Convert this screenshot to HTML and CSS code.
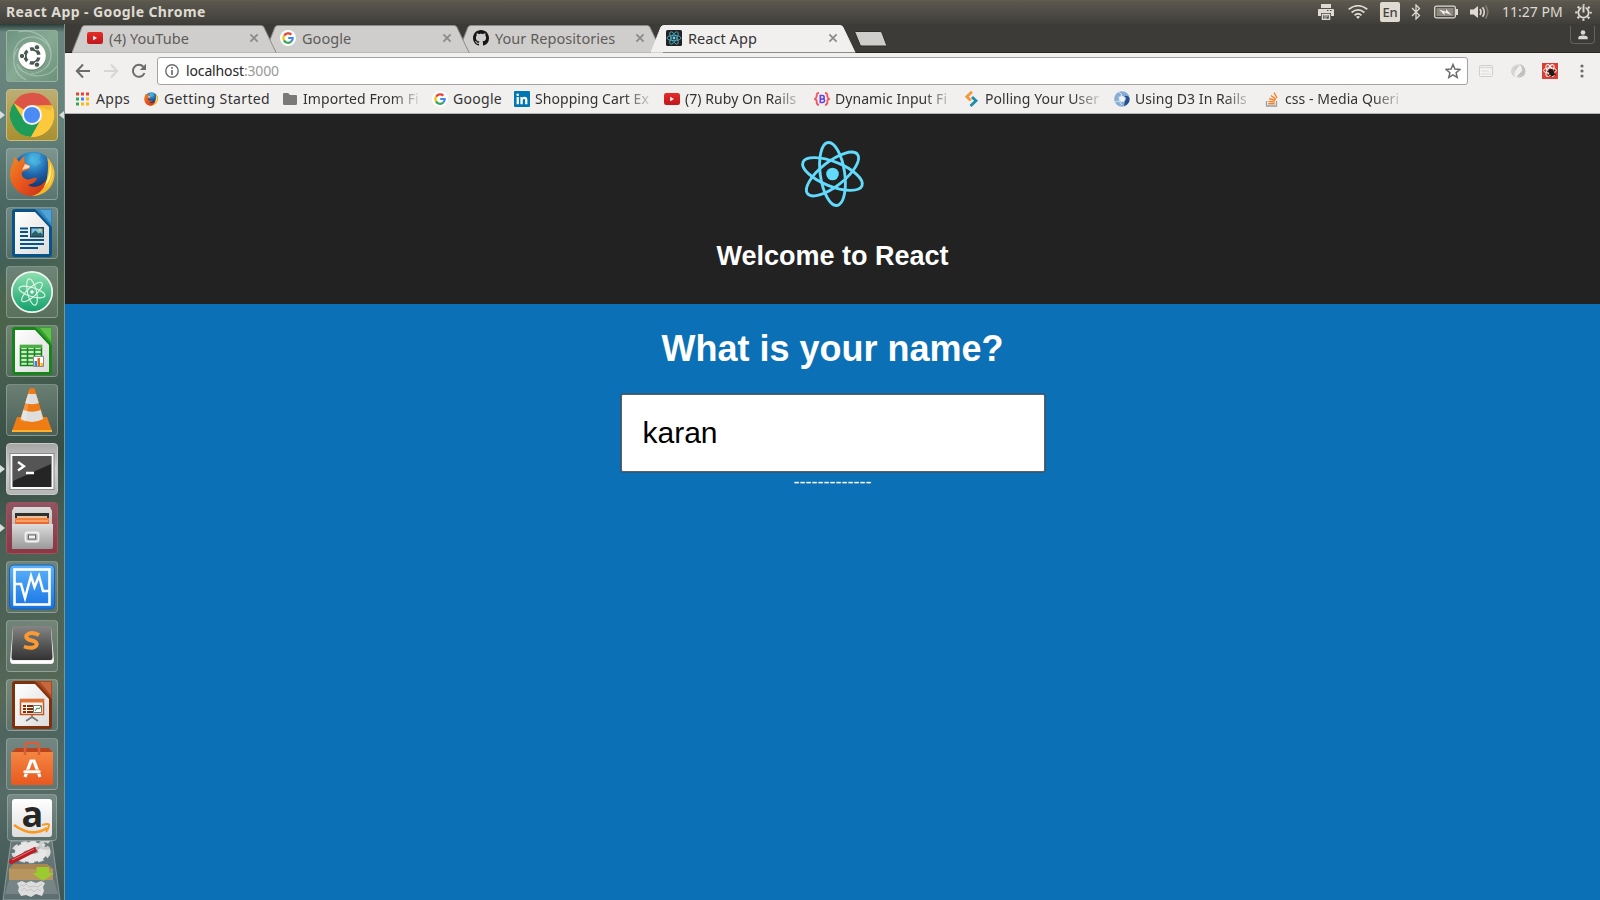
FILE: index.html
```html
<!DOCTYPE html>
<html lang="en">
<head>
<meta charset="utf-8">
<title>React App - Google Chrome</title>
<link rel="stylesheet" href="styles.css">
</head>
<body>
<svg class="defs" width="0" height="0" aria-hidden="true">
  <defs>
    <linearGradient id="red" x1="0" y1="0" x2="0" y2="1"><stop offset="0" stop-color="#e52d27"/><stop offset="1" stop-color="#bf171d"/></linearGradient>
    <linearGradient id="org" x1="0" y1="0" x2="0" y2="1"><stop offset="0" stop-color="#f58642"/><stop offset="1" stop-color="#e8581f"/></linearGradient>
    <linearGradient id="blu" x1="0" y1="0" x2="0" y2="1"><stop offset="0" stop-color="#5db4fa"/><stop offset="1" stop-color="#1573e6"/></linearGradient>
    <linearGradient id="grn" x1="0" y1="0" x2="0" y2="1"><stop offset="0" stop-color="#8fe0b0"/><stop offset="1" stop-color="#12a06c"/></linearGradient>
    <linearGradient id="gry" x1="0" y1="0" x2="0" y2="1"><stop offset="0" stop-color="#dcdcdc"/><stop offset="1" stop-color="#9a9a9a"/></linearGradient>
    <linearGradient id="drk" x1="0" y1="0" x2="0" y2="1"><stop offset="0" stop-color="#858585"/><stop offset=".5" stop-color="#5a5a5a"/><stop offset="1" stop-color="#333"/></linearGradient>
    <linearGradient id="fox" x1="0" y1="0" x2="1" y2="1"><stop offset="0" stop-color="#f08a24"/><stop offset=".5" stop-color="#e8551d"/><stop offset="1" stop-color="#c5301a"/></linearGradient>
    <radialGradient id="globe" cx=".5" cy=".2" r=".7"><stop offset="0" stop-color="#49c0ea"/><stop offset=".5" stop-color="#1f66ac"/><stop offset="1" stop-color="#0e2f66"/></radialGradient>
    <linearGradient id="paper" x1="0" y1="0" x2="1" y2="1"><stop offset="0" stop-color="#fff"/><stop offset="1" stop-color="#dcdcdc"/></linearGradient>
    <symbol id="yt" viewBox="0 0 16 16"><rect y="2" width="16" height="12" rx="2.2" fill="url(#red)"/><path d="M6.2 5.8v4.400L10 8z" fill="#fff"/></symbol>
    <symbol id="goog" viewBox="0 0 16 16"><circle cx="8" cy="8" r="8" fill="#fff"/><g fill="none" stroke-width="2.2"><path d="M4.200 5.600A4.800 4.800 0 0 1 11.400 4.600" stroke="#ea4335"/><path d="M4 10.400A5 5 0 0 1 4 5.600" stroke="#fbbc05"/><path d="M11.200 11.600A4.700 4.700 0 0 1 4 10.400" stroke="#34a853"/><path d="M8.200 8h4.500A4.600 4.600 0 0 1 11.200 11.600" stroke="#4285f4"/></g></symbol>
    <symbol id="firefox" viewBox="0 0 52 52"><circle cx="27" cy="24.500" r="20.800" fill="url(#globe)"/><path d="M24 6c5-2 9-1 11 1l-2 4 2 4-6 3-6-4z" fill="#4cb3df" opacity=".55"/><path d="M41 9c6 6 9 14 7 22-2 10-11 17-22 17l-5-4c11 1 18-5 20-14 1-7 2-14 0-21z" fill="#f6b92b"/><path d="M44 15c3 8 1 18-6 24 4-8 6-15 6-24zM47 21c1 7-2 14-6 19 4-7 6-12 6-19z" fill="#fff08a"/><path d="M8 9c2 1 4 3 5 5 2-3 4-5 6-6-1 3-1 5 0 7l5 3-1 3-7 3c-1 3 1 6 4 7 4 2 7-2 11-1-1 4-5 6-9 7 6 4 14 1 18-5-1 8-6 14-14 16C14 48 4 39 4 26c0-4 1-8 3-11z" fill="url(#fox)"/><path d="M19 16l5 2-1 2-7 2z" fill="#fbd9c1"/></symbol>
    <symbol id="x" viewBox="0 0 10 10"><path d="M1.400 1.400l7.200 7.200M8.600 1.400L1.400 8.600" stroke="#8b8987" stroke-width="1.700"/></symbol>
  </defs>
</svg>

<header class="panel">
  <span class="panel-title">React App - Google Chrome</span>
  <div class="indicators">
    <svg width="16" height="16" viewBox="0 0 16 16"><path d="M3 0h10v4H3zM1 5h14q1 0 1 1v6h-3V9H3v3H0V6q0-1 1-1z" fill="#dfdbd2"/><path d="M4.500 10.500h7v5h-7z" fill="#47453f" stroke="#dfdbd2" stroke-width="1.500"/><path d="M6 12h4M6 14h3" stroke="#dfdbd2"/><path d="M9 6.500h1.500M12 6.500h1.500" stroke="#47453f"/></svg>
    <svg class="i-wifi" width="20" height="14" viewBox="0 0 20 14"><g fill="none" stroke="#dfdbd2" stroke-width="1.700"><path d="M.7 4.300Q10-2.800 19.300 4.300M3.600 7.500Q10 2.200 16.400 7.500M6.500 10.300Q10 7.200 13.500 10.300"/></g><path d="M8 11.700q2-1.500 4 0L10 14z" fill="#dfdbd2"/></svg>
    <span class="lang">En</span>
    <svg class="i-bt" width="10" height="16" viewBox="0 0 10 16"><path d="M1 4l7.500 7.500L5 15V1l3.500 3.500L1 12" fill="none" stroke="#dfdbd2" stroke-width="1.300"/></svg>
    <svg class="i-bat" width="24" height="14" viewBox="0 0 24 14"><rect x=".7" y="1.200" width="20.600" height="11.600" rx="1.500" fill="none" stroke="#dfdbd2" stroke-width="1.300"/><rect x="2.500" y="3" width="17" height="8" fill="#8d8981"/><path d="M22 4h2v6h-2z" fill="#dfdbd2"/><path d="M5 4.500l7 2.200V4l5.500 6-7-2.500v2.800z" fill="#f2efe8"/></svg>
    <svg class="i-snd" width="20" height="16" viewBox="0 0 20 16"><path d="M0 5.500h3.500L8 2v12l-4.500-3.500H0z" fill="#dfdbd2"/><g fill="none" stroke-width="1.600"><path d="M10 5q2 3 0 6M12.500 3.200q3.600 4.800 0 9.600" stroke="#dfdbd2"/><path d="M15.500 1.500q4.600 6.500 0 13" stroke="#7f7c74"/></g></svg>
    <span class="clock">11:27 PM</span>
    <svg class="i-gear" width="17" height="17" viewBox="0 0 17 17"><circle cx="8.500" cy="8.500" r="5.200" fill="none" stroke="#dfdbd2" stroke-width="1.800"/><circle cx="8.500" cy="8.500" r="7.200" fill="none" stroke="#dfdbd2" stroke-width="2.200" stroke-dasharray="2.100 3.555" stroke-dashoffset="1.050"/><path d="M8.500 1v8" stroke="#504e47" stroke-width="4"/><path d="M8.500 1.200v7.300" stroke="#dfdbd2" stroke-width="1.900"/></svg>
  </div>
</header>

<div class="desktop">
  <nav class="launcher">
    <div class="tile tile-dash"><svg viewBox="0 0 52 52"><g fill="none" stroke="#c8dccf" stroke-opacity=".5" stroke-width="1.200"><path d="M8 30C5 12 23 0 38 11c8 6 9 18 3 26M12 2c18-4 34 8 33 24-1 12-11 17-20 18M20 50C8 44 4 30 12 18M51 36C41 51 17 48 11 34"/></g><circle cx="26" cy="26.800" r="14" fill="#42594e" opacity=".35"/><circle cx="26" cy="25.800" r="13.800" fill="#fff"/><circle cx="26" cy="26" r="7" fill="none" stroke="#48594f" stroke-width="3.400" stroke-dasharray="11.600 3.060" stroke-dashoffset="-1.530"/><g fill="#48594f" stroke="#fff" stroke-width="1"><circle cx="16" cy="26" r="2.700"/><circle cx="31" cy="17.300" r="2.700"/><circle cx="31" cy="34.700" r="2.700"/></g></svg></div>
    <div class="tile tile-chrome"><svg viewBox="0 0 52 52"><circle cx="26" cy="26" r="22" fill="#fdc93c"/><path d="M26 26L7.500 14A22 22 0 0 1 46 16.500H26z" fill="#dc5347"/><path d="M7.500 14A22 22 0 0 0 25 48L35 31 26 26 16 28z" fill="#1f9d58"/><path d="M35 16.500h11A22 22 0 0 1 25 48l9.500-17z" fill="#fdc93c"/><path d="M46 16.500H27l18 5z" fill="#c98d22" opacity=".3"/><circle cx="26" cy="26" r="10" fill="#f5f5f5"/><circle cx="26" cy="26" r="8" fill="#4c8bf5"/></svg></div>
    <div class="tile"><svg viewBox="0 0 52 52"><use href="#firefox" width="52" height="52"/></svg></div>
    <div class="tile"><svg viewBox="0 0 52 52"><rect x="6" y="2" width="40" height="48" rx="3" fill="#07538a"/><path d="M29 2h17v18z" fill="#3084bb"/><path d="M34 3h11v13z" fill="#50a2d6"/><path d="M9 5h20l14 15v27H9z" fill="url(#paper)"/><path d="M14 21.500h8M14 25h8M14 29h8M14 33h24M14 37h24M14 41h18" stroke="#07538a" stroke-width="1.800"/><path d="M24.700 20.700h12.600v9H24.700z" fill="#7ec2e9" stroke="#16455f" stroke-width="1.400"/><path d="M25.500 29v-2l4-3.500 3 3 2-1 2 2V29z" fill="#2b5f61"/><circle cx="34" cy="23" r="1.300" fill="#f8d33e"/></svg></div>
    <div class="tile"><svg viewBox="0 0 52 52"><circle cx="26" cy="26" r="20.200" fill="url(#grn)" stroke="#f1f4ef" stroke-width="1.700"/><g fill="none" stroke="#e3f8e8" stroke-width="1.100"><ellipse cx="26" cy="26" rx="13.500" ry="4.500" transform="rotate(17 26 26)"/><ellipse cx="26" cy="26" rx="13.500" ry="4.500" transform="rotate(77 26 26)"/><ellipse cx="26" cy="26" rx="13.500" ry="4.500" transform="rotate(137 26 26)"/></g><circle cx="26" cy="26" r="1.700" fill="#fff"/></svg></div>
    <div class="tile"><svg viewBox="0 0 52 52"><rect x="6" y="2" width="40" height="48" rx="3" fill="#17851a"/><path d="M29 2h17v18z" fill="#35a12e"/><path d="M34 3h11v13z" fill="#62c14e"/><path d="M9 5h20l14 15v27H9z" fill="url(#paper)"/><path d="M14 20h22v21H14z" fill="#c8efc0"/><path d="M14.500 20.500h21v20h-21zM21.500 20v21M28.500 20v21M14 25h22M14 29h22M14 33h22M14 37h22" stroke="#16841c" stroke-width="1.500" fill="none"/><path d="M14 20h22v3H14z" fill="#4dae43"/><path d="M27.500 31.500h10v10h-10z" fill="#fff" stroke="#888"/><path d="M28.500 36h2.500v5h-2.500z" fill="#2a8bd0"/><path d="M31.500 33h2.500v8h-2.500z" fill="#e8641b"/><path d="M34.500 38h2.500v3h-2.500z" fill="#f3c01f"/></svg></div>
    <div class="tile"><svg viewBox="0 0 52 52"><path d="M11 33h30l5 14q0 1-2 1H8q-2 0-2-1z" fill="#ef7d13"/><path d="M6 46h40v2H6z" fill="#fcb22c"/><path d="M23.500 4.500q2.500-1 5 0L38 36q-12 8-24 0z" fill="#f07a14"/><path d="M22 10h8l2.800 9q-6.800 2.500-13.600 0z" fill="#dedede"/><path d="M17.300 26q8.700 3.500 17.400 0l2.500 9q-11.200 6-22.400 0z" fill="#dedede"/><path d="M24 5l-4 33q-4 0-6-2z" fill="#fff" opacity=".22"/></svg></div>
    <div class="tile tile-term"><svg viewBox="0 0 52 52"><rect x="4" y="10.500" width="44" height="36" fill="#fafafa" stroke="#8a8a8a"/><rect x="6.500" y="13" width="39" height="31" fill="#252525"/><path d="M7 13h38v8L7 38z" fill="#555"/><path d="M12 19l6 4.200-6 4.300M20 30h8" stroke="#fff" stroke-width="2.300" fill="none"/></svg></div>
    <div class="tile tile-files"><svg viewBox="0 0 52 52"><path d="M8 5h36l2 4v38H6V9z" fill="url(#gry)"/><path d="M9 11h34v12H9z" fill="#30302e"/><path d="M11 14h30v2H11z" fill="#e9c19a"/><path d="M9 16h34v8H9z" fill="url(#org)"/><path d="M10 19h32" stroke="#f7caa3"/><path d="M6 22h41v23q0 2-2 2H8q-2 0-2-2z" fill="url(#gry)"/><rect x="19.500" y="30.500" width="13" height="9" rx="1.500" fill="none" stroke="#f2f2f2" stroke-width="1.800"/><rect x="22.500" y="33" width="7" height="4" fill="#f2f2f2" stroke="#666"/></svg></div>
    <div class="tile"><svg viewBox="0 0 52 52"><rect x="3.500" y="4" width="45" height="44" rx="4" fill="url(#blu)" stroke="#1162bd"/><rect x="8.500" y="8.500" width="35" height="35" fill="none" stroke="#fff" stroke-width="2.600"/><path d="M9 23h6l4 14 6-22 3.500 11L33 15l4 15h6" fill="none" stroke="#fff" stroke-width="2.500"/></svg></div>
    <div class="tile"><svg viewBox="0 0 52 52"><path d="M7 7L4 40q0 4 3 4h38q3 0 3-4L45 7z" fill="#eee"/><path d="M5 42h42" stroke="#fff" stroke-width="2"/><path d="M9 6h34q2 0 2 2l1.500 29q0 3-2 3h-37q-2 0-2-3L7 8q0-2 2-2z" fill="url(#drk)"/><path d="M33 15q-6-3-10-1.500c-5 2-3 6 3 7 5 1 7 5 1 7q-4 1-9-1" stroke="#f99a34" stroke-width="4" fill="none"/></svg></div>
    <div class="tile"><svg viewBox="0 0 52 52"><rect x="6" y="2" width="40" height="48" rx="3" fill="#80310b"/><path d="M29 2h17v18z" fill="#a84a20"/><path d="M34 3h11v13z" fill="#c7683e"/><path d="M9 5h20l14 15v27H9z" fill="url(#paper)"/><path d="M14.500 20.500h23v15h-23z" fill="#fff3e9" stroke="#c4571d" stroke-width="1.500"/><path d="M14 20h24v3.500H14z" fill="#dd7136"/><path d="M17 27h3M17 30h3M17 33h3M21 27h6M21 30h6M21 33h6" stroke="#7e2f0c" stroke-width="1.800"/><path d="M27.500 26.500h8v7h-8z" fill="#fff" stroke="#777"/><path d="M29 32l2-3 2 1 2-3" stroke="#2b9d3b" fill="none"/><path d="M26 36v2l-6 4M26 38l6 4" stroke="#777" stroke-width="1.700" fill="none"/></svg></div>
    <div class="tile"><svg viewBox="0 0 52 52"><path d="M5 15l5-5h33l4 5z" fill="#b9451d"/><path d="M5 14h42v31q0 2-2 2H7q-2 0-2-2z" fill="url(#org)"/><path d="M19 17V8q0-3 3-3h8q3 0 3 3v9" stroke="#d65f3d" stroke-width="2.500" fill="none"/><path d="M19 39l6-16h3l6 16" stroke="#fff" stroke-width="3.200" fill="none"/><rect x="17" y="32" width="18" height="3.500" rx="1.700" fill="#fff" stroke="#eb6a2e" stroke-width=".6"/></svg></div>
    <div class="tile tile-amazon"><span class="amazon-a">a</span><svg viewBox="0 0 50 47"><path d="M7 31q18 13 33 3" stroke="#f79a1d" stroke-width="2.600" fill="none"/><path d="M35 31q7-2 7 0 0 3-3 7" stroke="#f79a1d" stroke-width="2" fill="none"/></svg></div>
    <svg class="folded" viewBox="0 0 65 59">
      <path d="M12 0h41l8 59H4z" fill="#ccd" fill-opacity=".22" stroke="#c3cdca" stroke-opacity=".5"/>
      <ellipse cx="32" cy="11" rx="17.500" ry="9" fill="none" stroke="#dcdcdc" stroke-width="4.500" stroke-dasharray="5.500 3.500"/><ellipse cx="32" cy="11" rx="12" ry="6" fill="#8d9a97" stroke="#e6e6e6" stroke-width="8"/>
      <path d="M15 23h33l6 5v11H10V28z" fill="#b8945f"/><path d="M15 23h33l6 5H10z" fill="#a98555"/>
      <path d="M12.500 20.500L36 8.500" stroke="#b81e25" stroke-width="5" stroke-linecap="round"/><path d="M13 19L35 8" stroke="#f0797a"/><path d="M37 8l6-3" stroke="#bbb" stroke-width="3"/><path d="M50 1.500a5 3.500 0 1 0 0 4.500" fill="none" stroke="#ccc" stroke-width="3"/>
      <path d="M37.500 26H50v6h5L44 40 33 32h4.500z" fill="#9ccb2f"/>
      <path d="M10 39h45l4 14H6z" fill="#acb4b2" fill-opacity=".3"/>
      <path d="M18 42l5-2 4 2 5-2 5 2 5-2 4 2-2 4 1 4-2 5-6-2-5 3-5-2-5 1-3-5 1-4z" fill="#ddd"/><path d="M21 44l4 1 2-2 3 3 5-1 4 1 4-3M22 50l3-3 3 3 4-2 3 3 3-3 4 2" stroke="#bdbdbd" stroke-width=".8" fill="none"/>
    </svg>
    <i class="pip pip-l pip-chrome"></i><i class="pip pip-r pip-chrome"></i><i class="pip pip-l pip-term"></i><i class="pip pip-l pip-files"></i>
  </nav>

  <section class="browser">
    <div class="tabstrip">
      <div class="tab first"><svg class="shape" viewBox="0 0 205 29"><path d="M0 28.500L10 3Q11 1.500 13 1.500h176q2 0 2.800 1.500l12.200 25.500"/></svg><svg class="fav"><use href="#yt"/></svg><span>(4) YouTube</span><svg class="close"><use href="#x"/></svg></div>
      <div class="tab second"><svg class="shape" viewBox="0 0 205 29"><path d="M0 28.500L10 3Q11 1.500 13 1.500h176q2 0 2.800 1.500l12.200 25.500"/></svg><svg class="fav"><use href="#goog"/></svg><span>Google</span><svg class="close"><use href="#x"/></svg></div>
      <div class="tab"><svg class="shape" viewBox="0 0 205 29"><path d="M0 28.500L10 3Q11 1.500 13 1.500h176q2 0 2.800 1.500l12.200 25.500"/></svg><svg class="fav" viewBox="0 0 16 16"><path d="M8 0C3.580 0 0 3.580 0 8c0 3.540 2.290 6.530 5.470 7.590.4.070.55-.17.55-.38 0-.19-.01-.82-.01-1.490-2.010.37-2.530-.49-2.690-.94-.09-.23-.48-.94-.82-1.130-.28-.15-.68-.52-.01-.53.63-.01 1.080.58 1.230.82.72 1.210 1.870.87 2.330.66.07-.52.28-.87.51-1.070-1.780-.2-3.640-.89-3.640-3.950 0-.87.31-1.590.82-2.150-.08-.2-.36-1.020.08-2.120 0 0 .67-.21 2.200.82.64-.18 1.320-.27 2-.27s1.360.09 2 .27c1.530-1.040 2.200-.82 2.200-.82.44 1.100.16 1.920.08 2.120.51.56.82 1.270.82 2.150 0 3.070-1.870 3.750-3.650 3.950.29.25.54.73.54 1.480 0 1.070-.01 1.930-.01 2.200 0 .21.15.46.55.38A8.010 8.010 0 0 0 16 8c0-4.420-3.580-8-8-8z" fill="#151515"/></svg><span>Your Repositories</span><svg class="close"><use href="#x"/></svg></div>
      <div class="tab active"><svg class="shape" viewBox="0 0 205 29"><path d="M0 28.500L10 3Q11 1.500 13 1.500h176q2 0 2.800 1.500l12.200 25.500"/></svg><svg class="fav" viewBox="0 0 16 16"><rect width="16" height="16" rx="1.500" fill="#222"/><g fill="none" stroke="#53b8d2" stroke-width=".8"><ellipse cx="8" cy="8" rx="7" ry="2.700"/><ellipse cx="8" cy="8" rx="7" ry="2.700" transform="rotate(60 8 8)"/><ellipse cx="8" cy="8" rx="7" ry="2.700" transform="rotate(120 8 8)"/></g><circle cx="8" cy="8" r="1.400" fill="#61dafb"/></svg><span>React App</span><svg class="close"><use href="#x"/></svg></div>
      <svg class="newtab" width="34" height="16" viewBox="0 0 34 16"><path d="M1.500.5H26q1.500 0 2 1.300l4.500 12q.5 1.200-1 1.200H8q-1.500 0-2-1.300L1 1.700Q.5.5 1.500.5z" fill="#cfcdcb" stroke="#2e2c29"/></svg>
      <div class="profile"><svg width="10" height="10" viewBox="0 0 10 10"><circle cx="5" cy="2.500" r="2.300" fill="#dad8d4"/><path d="M.3 9.200V7.600Q.5 5.500 5 5.500t4.700 2.100v1.600z" fill="#dad8d4"/></svg></div>
    </div>

    <div class="toolbar">
      <svg class="nav" width="16" height="16" viewBox="0 0 16 16"><path d="M15 8H2M8 1.500L1.800 8 8 14.500" fill="none" stroke="#6d6c6a" stroke-width="2"/></svg>
      <svg class="nav" width="16" height="16" viewBox="0 0 16 16"><path d="M1 8h13M8 1.500L14.200 8 8 14.500" fill="none" stroke="#d8d6d4" stroke-width="2"/></svg>
      <svg class="nav" width="16" height="16" viewBox="0 0 16 16"><path d="M13.500 10A6 6 0 1 1 12.300 3.700" fill="none" stroke="#6d6c6a" stroke-width="2"/><path d="M15 .8V7H8.800z" fill="#6d6c6a"/></svg>
      <div class="omnibox">
        <svg width="14" height="14" viewBox="0 0 14 14"><circle cx="7" cy="7" r="6.200" fill="none" stroke="#6d6d6d" stroke-width="1.400"/><path d="M7 3v1.700M7 6v5" stroke="#6d6d6d" stroke-width="1.700"/></svg>
        <span class="url">localhost<em>:3000</em></span>
        <svg class="star" width="16" height="16" viewBox="0 0 16 16"><path d="M8 1.500l1.900 4.600 4.900.4-3.700 3.200 1.100 4.800L8 11.900l-4.200 2.600 1.100-4.800L1.200 6.500l4.900-.4z" fill="none" stroke="#6d6d6d" stroke-width="1.500"/></svg>
      </div>
      <svg class="ext e1" width="14" height="12" viewBox="0 0 14 12"><rect x=".5" y=".5" width="13" height="11" rx="1" fill="#f4f3f2" stroke="#d0cfce"/><path d="M1 2.500h12" stroke="#dad9d8" stroke-width="1.500"/><path d="M2 6h8M2 9h10" stroke="#dcdad9"/></svg>
      <svg class="ext e2" width="16" height="16" viewBox="0 0 16 16"><path d="M10 1Q1 2 1 8q0 4 4 6Q3 7 10 1z" fill="#d6d5d4"/><path d="M9 1q6 1 6.500 7T7 15q5-4 5-8T9 1z" fill="#c3c2c1"/><path d="M6 14q5-1 6-6-3 4-6 6zM10 2Q5 4 5 8q2-4 5-6z" fill="#aaa9a9"/></svg>
      <svg class="ext e3" width="16" height="16" viewBox="0 0 16 16"><rect width="16" height="16" fill="#d93f34"/><g fill="none" stroke="#fff" stroke-width="1"><ellipse cx="8" cy="7.500" rx="6.500" ry="2.600"/><ellipse cx="8" cy="7.500" rx="6.500" ry="2.600" transform="rotate(60 8 7.500)"/><ellipse cx="8" cy="7.500" rx="6.500" ry="2.600" transform="rotate(120 8 7.500)"/></g><ellipse cx="9.500" cy="9.500" rx="2.600" ry="3.800" fill="#241714" transform="rotate(-30 9.500 9.500)"/><path d="M5 8l9 4M6 13l7-6M9 14l2-8" stroke="#241714"/></svg>
      <svg class="ext e4" width="4" height="14" viewBox="0 0 4 14"><g fill="#6d6c6a"><circle cx="2" cy="2" r="1.600"/><circle cx="2" cy="7" r="1.600"/><circle cx="2" cy="12" r="1.600"/></g></svg>
    </div>

    <div class="bookmarks">
      <div class="bm b-apps"><svg viewBox="0 0 16 16"><path d="M1 1.500h3v3H1zM6 1.500h3v3H6zM11 1.500h3v3h-3z" fill="#ea4335"/><path d="M1 6.500h3v3H1z" fill="#34a853"/><path d="M6 6.500h3v3H6z" fill="#4285f4"/><path d="M11 6.500h3v3h-3zM6 11.500h3v3H6zM11 11.500h3v3h-3z" fill="#fbb70a"/><path d="M1 11.500h3v3H1z" fill="#34a853"/></svg><span>Apps</span></div>
      <div class="bm b-start"><svg><use href="#firefox" width="16" height="16"/></svg><span>Getting Started</span></div>
      <div class="bm fade"><svg viewBox="0 0 16 16"><path d="M1 3.200Q1 2 2.200 2h4L8 4h6q1 0 1 1v7.800q0 1.200-1.200 1.200H2.200Q1 14 1 12.800z" fill="#7a7978"/></svg><span>Imported From Fi</span></div>
      <div class="bm b-goog"><svg><use href="#goog"/></svg><span>Google</span></div>
      <div class="bm fade"><svg viewBox="0 0 16 16"><rect width="16" height="16" rx="1" fill="#0077b5"/><g fill="#fff"><circle cx="3.700" cy="3.700" r="1.300"/><path d="M2.600 6h2.300v7.300H2.600zM6.400 6h2.100v1Q9.300 5.800 10.700 5.800 13.400 5.800 13.400 9v4.300h-2.300V9.500Q11.100 7.800 10 7.800T8.700 9.500v3.800H6.400z"/></g></svg><span>Shopping Cart Ex</span></div>
      <div class="bm fade"><svg><use href="#yt"/></svg><span>(7) Ruby On Rails</span></div>
      <div class="bm fade"><svg viewBox="0 0 16 16"><path d="M5 2Q2.500 2 2.700 4.500T.8 8Q3 8.500 2.700 11T5 14M11 2q2.500 0 2.300 2.500T15.200 8Q13 8.500 13.300 11T11 14" stroke="#f4585c" stroke-width="1.900" fill="none"/><path d="M6.300 4.500v7H9q1.600-.3 1.600-1.900T9 8Q10.300 7.500 10.200 6T8.500 4.500zM6.300 8H9" stroke="#6440e8" stroke-width="1.600" fill="none"/></svg><span>Dynamic Input Fi</span></div>
      <div class="bm fade"><svg viewBox="0 0 16 16"><path d="M8 .8L2.800 5.700 6.800 9.500" stroke="#f9963a" stroke-width="2.800" fill="none"/><path d="M8 6l4 3.800L6.500 15" stroke="#1d8ca9" stroke-width="2.800" fill="none"/></svg><span>Polling Your User</span></div>
      <div class="bm fade"><svg viewBox="0 0 16 16"><circle cx="8" cy="8" r="5.400" fill="none" stroke="#87add7" stroke-width="4.800"/><path d="M10 5q4 2 1 5l-1 5q6-2 5.500-8Q14 4 10 5z" fill="#244f86"/><path d="M5 1l3 3-4 3M1 11l4-1 3 4" fill="none" stroke="#d6e4f4"/></svg><span>Using D3 In Rails</span></div>
      <div class="bm fade"><svg viewBox="0 0 16 16"><path d="M2.500 10v5h10v-5" fill="none" stroke="#9b9d9f" stroke-width="1.300"/><path d="M4.200 12.800h6.500M4.400 10.400l6.400.7M5.200 7.500l6 2M7 4.500l5 3.900M10 1.500l3 5.500" stroke="#f48024" stroke-width="1.400"/></svg><span>css - Media Queri</span></div>
    </div>

    <main class="page">
      <header class="hero">
        <svg class="logo" width="70" height="70" viewBox="-34.500 -35 70 70"><g fill="none" stroke="#61dafb" stroke-width="2.900"><ellipse rx="31.800" ry="12.200" transform="rotate(81.800)"/><ellipse rx="31.800" ry="12.200" transform="rotate(21.800)"/><ellipse rx="31.800" ry="12.200" transform="rotate(141.800)"/></g><circle r="6.300" fill="#61dafb"/></svg>
        <h2>Welcome to React</h2>
      </header>
      <div class="form">
        <h1>What is your name?</h1>
        <input class="name" type="text" value="karan">
        <p>-------------</p>
      </div>
    </main>
  </section>
</div>
</body>
</html>
```

FILE: styles.css
```css
* { box-sizing: border-box; }
body { margin: 0; width: 1600px; height: 900px; overflow: hidden; display: flex; flex-direction: column; font-family: "Noto Sans", "Open Sans", sans-serif; }
.defs { position: absolute; }
svg { display: block; flex: none; }

.panel { height: 24px; flex: none; display: flex; align-items: center; justify-content: space-between; padding: 0 8px 0 6px; background: linear-gradient(#66634f 0, #5b584f 1px, #3f3e39 100%); color: #dfdbd2; }
.panel-title { padding-bottom: 1px; font-size: 14px; font-weight: 700; letter-spacing: .41px; white-space: nowrap; }
.indicators { display: flex; align-items: center; height: 24px; }
.i-wifi { margin-left: 14px; }
.lang { width: 20px; height: 20px; margin-left: 12px; border-radius: 2px; background: #dfdbd2; color: #45433d; font: 500 13px/21px "Noto Sans", sans-serif; letter-spacing: -.3px; text-align: center; }
.i-bt { margin-left: 11px; }
.i-bat { margin-left: 13px; }
.i-snd { margin-left: 12px; }
.clock { width: 61px; margin-left: 12px; padding-bottom: 1px; font-size: 14px; white-space: nowrap; }
.i-gear { margin-left: 12px; }

.desktop { flex: 1; display: flex; min-height: 0; }
.launcher { position: relative; width: 65px; flex: none; display: flex; flex-direction: column; align-items: center; gap: 7px; padding: 6px 1px 0 0; border-right: 1px solid #7d9491; overflow: hidden;
  background: linear-gradient(#283b37 0, transparent 8px), linear-gradient(160deg, transparent 26%, rgba(95,110,55,.3) 31%, transparent 40%, rgba(25,45,40,.3) 50%, transparent 58%, rgba(130,135,70,.22) 75%, transparent 79%), linear-gradient(#6b877f 0, #64817a 12%, #4b6863 20%, #43605a 27%, #46604f 36%, #435a50 46%, #4b6155 60%, #465c58 72%, #566b66 88%, #3f5553 100%); }
.tile { width: 52px; height: 52px; flex: none; border-radius: 4px; border: 1px solid rgba(205,220,215,.32); background: linear-gradient(rgba(210,220,215,.28), rgba(190,205,200,.13)); }
.tile > svg { width: 52px; height: 52px; margin: -1px; }
.tile-dash { background: linear-gradient(135deg, #6e9480, #87aa93 50%, #6c927b); }
.tile-chrome { background: linear-gradient(#bcae76, #a98f2f); border-color: #c9bd85; }
.tile-term { background: linear-gradient(#a5a5a5, #d2d2d2 50%, #b5b5b5); border-color: #c8c8c8; }
.tile-files { background: linear-gradient(#8f5560, #8a3745); border-color: #a3505f; }
.tile-amazon { position: relative; width: 50px; height: 47px; margin-top: -3px; }
.tile-amazon::before { content: ""; position: absolute; inset: 4px 4px 3px 4px; border-radius: 3px; background: linear-gradient(#fff, #dedede); }
.tile-amazon > svg { position: relative; width: 50px; height: 47px; }
.amazon-a { position: absolute; left: 14px; top: -1px; color: #262626; font: 700 36px/40px "Open Sans", sans-serif; }
.folded { width: 65px; height: 59px; margin: -7px 0 0 -1px; }
.pip { position: absolute; width: 0; height: 0; border: 4px solid transparent; }
.pip-l { left: 0; border-left: 5px solid #d9dfdd; border-right: 0; }
.pip-r { right: 0; border-right: 5px solid #d9dfdd; border-left: 0; }
.pip-chrome { top: 87px; }
.pip-term { top: 441px; }
.pip-files { top: 500px; }

.browser { flex: 1; min-width: 0; display: flex; flex-direction: column; }
.tabstrip { position: relative; z-index: 0; height: 29px; flex: none; display: flex; align-items: flex-start; padding: 0 5px 0 7px; background: #3c3b37; box-shadow: inset 0 -1px #282522; }
.tab { position: relative; z-index: 1; width: 205px; height: 29px; margin-right: -12px; flex: none; display: flex; align-items: center; padding: 0 18px 1px 15px; color: #5e5c5a; font-size: 14.500px; }
.first { z-index: 3; }
.second { z-index: 2; }
.tab span { position: relative; flex: 1; margin-left: 6px; letter-spacing: .05px; white-space: nowrap; }
.tab .shape { position: absolute; left: 0; top: 0; width: 205px; height: 29px; fill: #d0cecc; stroke: #8d8b88; }
.tab .fav { position: relative; width: 16px; height: 16px; }
.tab .close { position: relative; width: 10px; height: 10px; }
.tab:not(.active) { box-shadow: inset 0 -1px #a4a2a0; }
.active { z-index: 4; color: #343434; }
.active .shape { fill: #f2f0ef; stroke: #f2f0ef; }
.newtab { margin: 7px 0 0 10px; }
.profile { width: 25px; height: 18px; margin: 2px 0 0 auto; display: flex; justify-content: center; padding-top: 4px; border: 1px solid #64625c; border-top: 0; border-radius: 0 0 4px 4px; }

.toolbar { height: 33px; flex: none; display: flex; align-items: center; padding: 3px 16px 0 10px; background: #f2f0ef; }
.nav { margin-right: 12px; }
.omnibox { width: 1311px; height: 28px; margin-left: -2px; flex: none; display: flex; align-items: center; padding: 0 6px 0 7px; background: #fff; border: 1px solid #a5a3a1; border-radius: 3px; }
.url { flex: 1; margin-left: 7px; padding-bottom: 2px; color: #262626; font-size: 14px; letter-spacing: -.14px; }
.url em { color: #999; font-style: normal; }
.e1 { margin-left: 11px; }
.e2 { margin-left: 17px; }
.e3 { margin-left: 16px; }
.e4 { margin-left: 22px; }

.bookmarks { height: 28px; flex: none; display: flex; align-items: center; padding: 0 0 1px 10px; background: #f2f0ef; border-bottom: 1px solid #b6b4b2; }
.bm { width: 150px; flex: none; display: flex; align-items: center; gap: 5px; color: #333; font-size: 14px; letter-spacing: .3px; white-space: nowrap; }
.bm span { padding-bottom: 2px; }
.bm svg { width: 16px; height: 16px; }
.b-apps { width: 68px; }
.b-start { width: 139px; letter-spacing: .36px; }
.b-goog { width: 82px; }
.fade { letter-spacing: .06px; }
.fade span { width: 120px; -webkit-mask-image: linear-gradient(90deg, #000 74%, transparent 100%); mask-image: linear-gradient(90deg, #000 74%, transparent 100%); }

.page { flex: 1; min-height: 0; background: #0b70b5; color: #fff; font-family: "Liberation Sans", Arial, sans-serif; text-align: center; }
.hero { height: 190px; padding-top: 25px; background: #222; }
.logo { margin: 0 auto; }
.hero h2 { margin: 32px 0 0; font-size: 27px; line-height: 31px; }
.form { display: flex; flex-direction: column; align-items: center; padding-top: 24px; }
.form h1 { margin: 0; font-size: 36px; line-height: 41px; }
.name { width: 424px; height: 78px; margin: 25px 0 0; padding: 0 20px 0 21px; border: 1px solid #5d6165; border-radius: 2px; background: #fff; color: #000; font: 30px "Liberation Sans", Arial, sans-serif; outline: 1px solid rgba(60,75,90,.55); outline-offset: 0; }
.form p { margin: 0; font-size: 18px; line-height: 20px; }
```
